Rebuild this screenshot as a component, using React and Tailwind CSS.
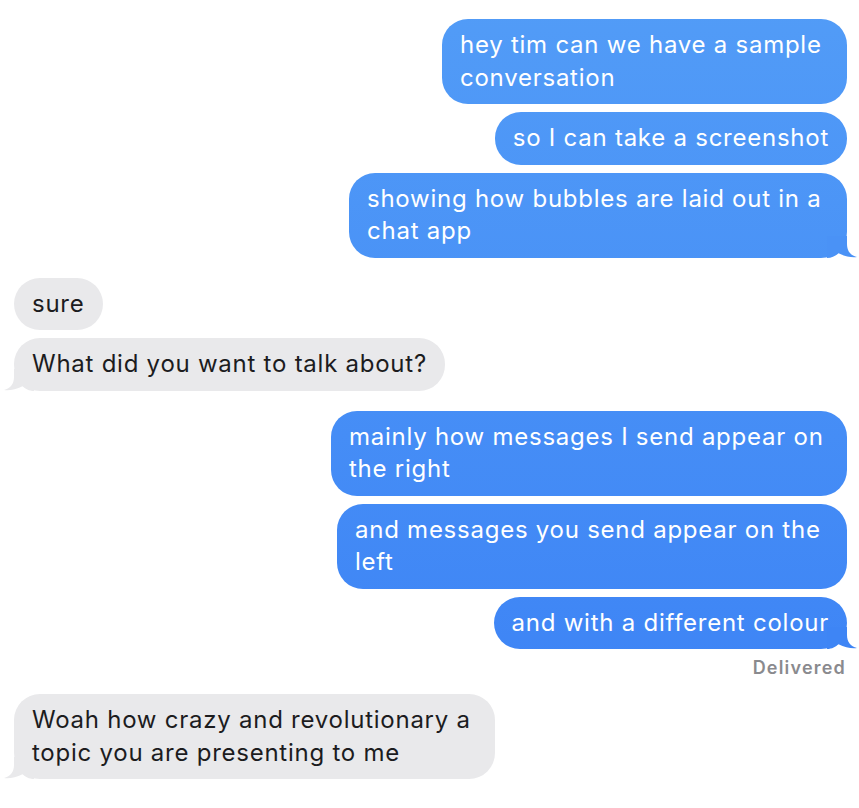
import React from "react";

const font = { fontFamily: "Inter, 'Noto Sans', sans-serif" };

function Tail({ side, color }) {
  const pos = side === "right" ? "right-[-10px] bottom-0" : "left-[-10px] bottom-0 -scale-x-100";
  return (
    <svg
      className={`absolute ${pos}`}
      width="30"
      height="22"
      viewBox="0 0 30 22"
    >
      <path
        d="M0 0 H20 V8 C20 15 23.5 19.5 30 21 C25 21.8 18 20.5 11.5 17.2 C9 19.5 5 22 0 22 Z"
        fill={color}
      />
    </svg>
  );
}

function Sent({ lines, w, tail, tailColor }) {
  return (
    <div className="flex justify-end">
      <div
        className={`relative rounded-[26px] bg-[linear-gradient(to_bottom,#529cf7,#3a80f5)] bg-fixed px-[18px] py-[10px] text-white text-[24px] leading-[32.5px] tracking-[0.75px] whitespace-nowrap ${w || ""}`}
      >
        {lines.map((l, i) => (
          <div key={i} className="relative z-10">{l}</div>
        ))}
        {tail && <Tail side="right" color={tailColor} />}
      </div>
    </div>
  );
}

function Recv({ lines, w, tail }) {
  return (
    <div className="flex justify-start">
      <div
        className={`relative rounded-[26px] bg-[#e9e9eb] px-[18px] py-[10px] text-[#1c1c1e] text-[24px] leading-[32.5px] tracking-[0.75px] whitespace-nowrap ${w || ""}`}
      >
        {lines.map((l, i) => (
          <div key={i} className="relative z-10">{l}</div>
        ))}
        {tail && <Tail side="left" color="#e9e9eb" />}
      </div>
    </div>
  );
}

export default function App() {
  return (
    <div className="min-h-[808px] w-[859px] bg-white pl-[14px] pr-[12px] pt-[19px] flex flex-col gap-2" style={font}>
      <Sent w="w-[405px]" lines={["hey tim can we have a sample", "conversation"]} />
      <Sent lines={["so I can take a screenshot"]} />
      <Sent w="w-[498px]" lines={["showing how bubbles are laid out in a", "chat app"]} tail tailColor="#4a92f6" />

      <div className="mt-[12px]">
        <Recv lines={["sure"]} />
      </div>
      <Recv lines={["What did you want to talk about?"]} tail />

      <div className="mt-[12px]">
        <Sent w="w-[516px]" lines={["mainly how messages I send appear on", "the right"]} />
      </div>
      <Sent w="w-[510px]" lines={["and messages you send appear on the", "left"]} />
      <Sent lines={["and with a different colour"]} tail tailColor="#3e85f5" />
      <div className="flex justify-end pr-[1px]">
        <span className="text-[18px] leading-[22px] font-semibold tracking-[1.2px] text-[#8a8a8e]">Delivered</span>
      </div>

      <div className="mt-[7px]">
        <Recv w="w-[481px]" lines={["Woah how crazy and revolutionary a", "topic you are presenting to me"]} tail />
      </div>
    </div>
  );
}
